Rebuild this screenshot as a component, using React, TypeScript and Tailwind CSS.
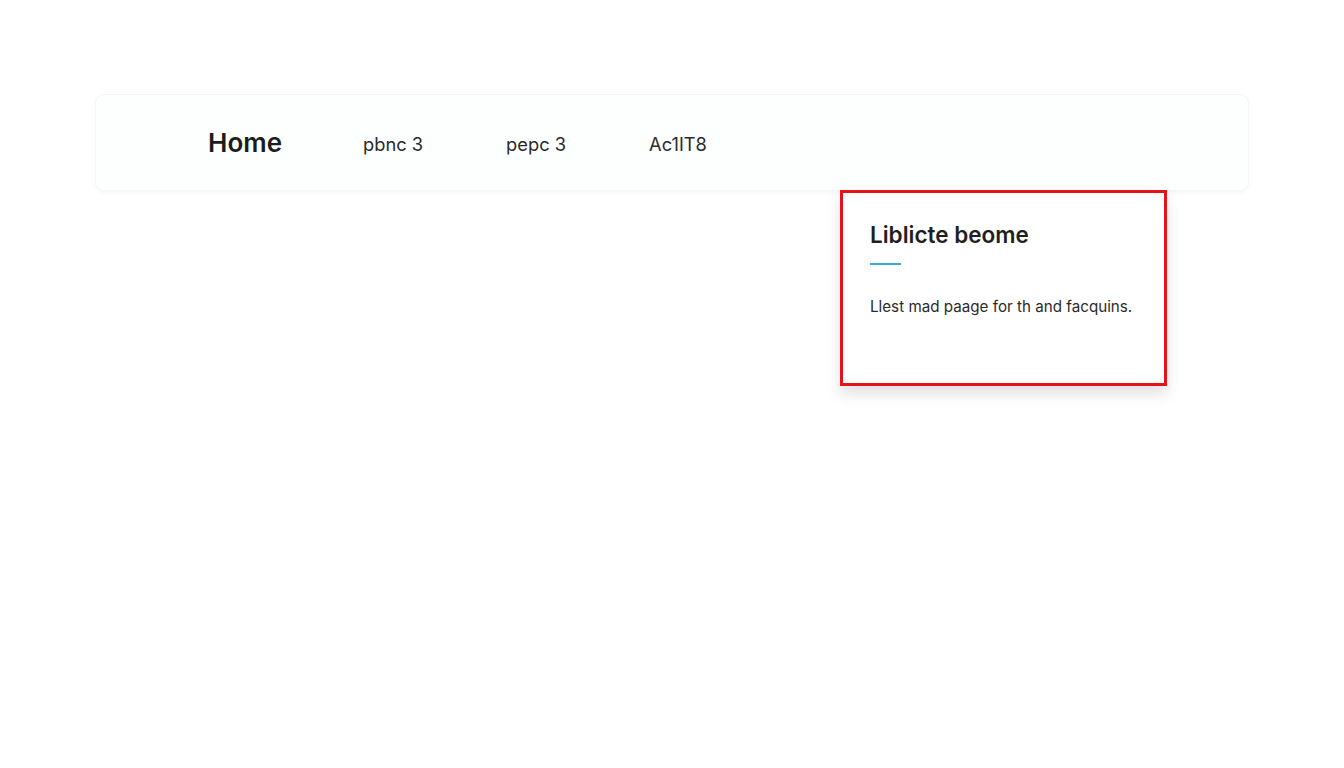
import React from 'react';

const links = ['pbnc 3', 'pepc 3', 'Ac1IT8'];

export default function App() {
  return (
    <div className="min-h-screen bg-white px-[96px] pt-[95px]" style={{ fontFamily: 'Inter, "Liberation Sans", sans-serif' }}>
      <div className="relative">
        <nav className="flex h-[95px] items-center gap-[83px] rounded-lg bg-[#fdfefe] pl-[112px] shadow-[0_2px_5px_rgba(0,0,0,0.05)] ring-1 ring-[#f4f6f6]">
          <span className="mr-[-2px] text-[26px] font-semibold text-[#1c1c1c]">Home</span>
          {links.map((l) => (
            <a key={l} className="mt-[4px] text-[18.3px] text-[#2a2a2a]">
              {l}
            </a>
          ))}
        </nav>

        <div className="absolute left-[744px] top-[95px] h-[196px] w-[327px] border-[3px] border-[#e5141b] bg-white px-[27px] pt-[25px] shadow-[0_8px_14px_rgba(0,0,0,0.12)]">
          <h3 className="text-[22.5px] font-semibold text-[#1f1f1f]">Liblicte beome</h3>
          <div className="mt-[11px] h-[2px] w-[31px] bg-[#3ba9d6]" />
          <p className="mt-[31px] text-[15.2px] text-[#2b2b2b]">Llest mad paage for th and facquins.</p>
        </div>
      </div>
    </div>
  );
}
